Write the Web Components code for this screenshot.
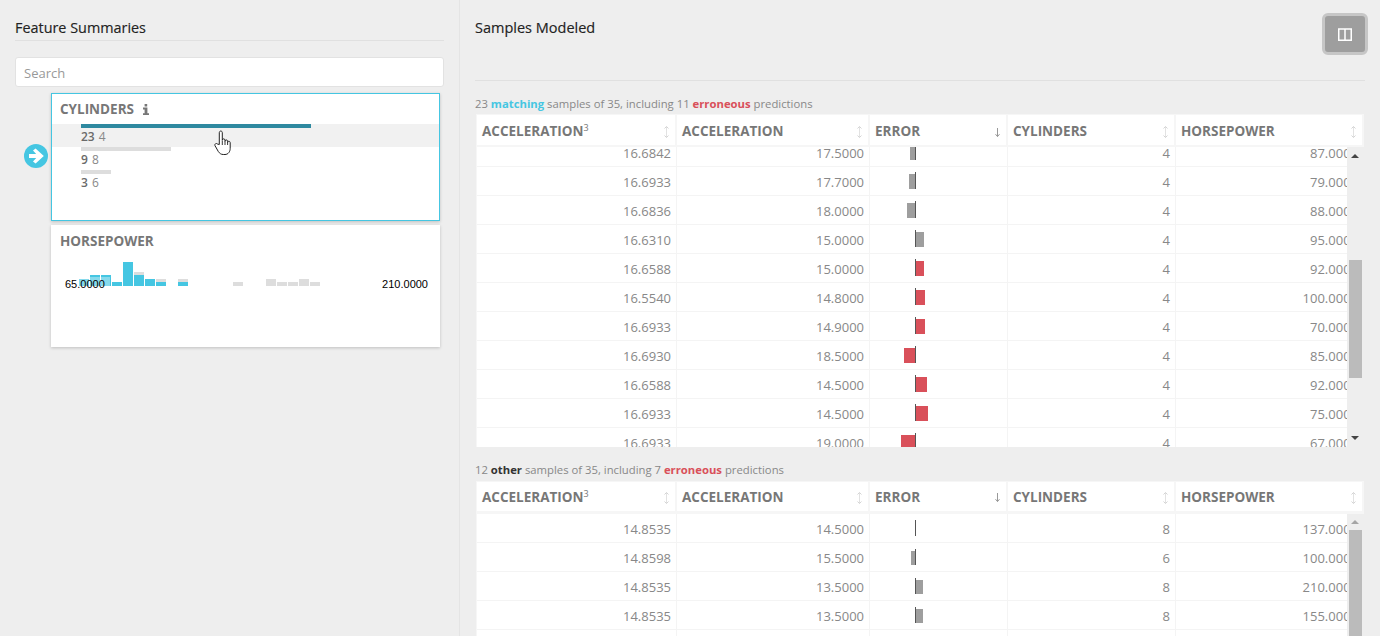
<!DOCTYPE html>
<html lang="en"><head><meta charset="utf-8"><title>Samples Modeled</title>
<style>
html,body{margin:0;padding:0;height:636px;overflow:hidden;background:#eee;font-family:"Open Sans",sans-serif;color:#777}
</style></head>
<body>
<app-shell>
  <side-panel slot="side">
    <feature-card name="CYLINDERS" info selected>
      <category-row count="23" value="4" width="230" active></category-row>
      <category-row count="9" value="8" width="90"></category-row>
      <category-row count="3" value="6" width="30"></category-row>
    </feature-card>
    <feature-card name="HORSEPOWER">
      <histo-chart min="65.0000" max="210.0000"></histo-chart>
    </feature-card>
  </side-panel>
  <main-panel slot="main">
    <sample-table set="a" head="30" gap="2" shift="-9" bodyh="300" thumbtop="113" thumbh="118">
      <span><span>23</span> <b style="color:#45c6e2">matching</b> samples of 35, including 11 <b style="color:#d9505a">erroneous</b> predictions</span>
    </sample-table>
    <sample-table set="b" head="29" gap="3" shift="0" bodyh="122" thumbtop="16" thumbh="140" lower>
      <span>12 <b style="color:#333">other</b> samples of 35, including 7 <b style="color:#d9505a">erroneous</b> predictions</span>
    </sample-table>
  </main-panel>
</app-shell>
<script>
const DATA={
 a:[["16.6842","17.5000",-5,0,"4","87.0000"],["16.6933","17.7000",-6,0,"4","79.0000"],["16.6836","18.0000",-8,0,"4","88.0000"],["16.6310","15.0000",8,0,"4","95.0000"],["16.6588","15.0000",8,1,"4","92.0000"],["16.5540","14.8000",9,1,"4","100.0000"],["16.6933","14.9000",9,1,"4","70.0000"],["16.6930","18.5000",-11,1,"4","85.0000"],["16.6588","14.5000",11,1,"4","92.0000"],["16.6933","14.5000",12,1,"4","75.0000"],["16.6933","19.0000",-14,1,"4","67.0000"]],
 b:[["14.8535","14.5000",0,0,"8","137.0000"],["14.8598","15.5000",-4,0,"6","100.0000"],["14.8535","13.5000",7,0,"8","210.0000"],["14.8535","13.5000",7,0,"8","155.0000"],["","",0,0,"",""]]
};
const COLS=["ACCELERATION<sup>3</sup>","ACCELERATION","ERROR","CYLINDERS","HORSEPOWER"];
function el(tag,render){customElements.define(tag,class extends HTMLElement{connectedCallback(){if(!this.shadowRoot){this.attachShadow({mode:"open"}).innerHTML=render(this)}}})}

el("app-shell",()=>`<style>
:host{display:flex;height:636px;overflow:hidden}
.s{flex:0 0 460px;box-sizing:border-box;border-right:1px solid #e4e4e4}
.m{flex:1;min-width:0}
</style><div class="s"><slot name="side"></slot></div><div class="m"><slot name="main"></slot></div>`);

el("side-panel",()=>`<style>
:host{display:block;padding:0 15px}
h2{margin:0;height:41px;box-sizing:border-box;padding-top:18px;font:400 14.4px/20px "Open Sans",sans-serif;color:#222;-webkit-text-stroke:.15px #222;border-bottom:1px solid #e0e0e0}
input{display:block;box-sizing:border-box;width:429px;height:30px;margin:16px 0 6px;padding:2px 8px 0;border:1px solid #e2e2e2;border-radius:3px;background:#fff;font:13px "Open Sans",sans-serif;color:#555;outline:0}
input::placeholder{color:#999;opacity:1}
.list{display:flex;flex-direction:column;gap:4px;margin-left:36px;width:389px}
</style><h2>Feature Summaries</h2><input placeholder="Search"><div class="list"><slot></slot></div>`);

el("feature-card",h=>`<style>
:host{display:block;position:relative;box-sizing:border-box;width:389px;height:${h.hasAttribute("selected")?128:122}px;background:#fff;border:1px solid ${h.hasAttribute("selected")?"#45c6e2":"#fff"};box-shadow:0 1px 3px rgba(0,0,0,.2)}
.t{display:flex;align-items:center;gap:9px;height:30px;padding-left:8px;font:700 13.5px/30px "Open Sans",sans-serif;color:#777}
.t svg{display:block}
.arrow{position:absolute;left:-28px;top:50px}
.hand{position:absolute;left:162px;top:36px}
</style><div class="t"><span>${h.getAttribute("name")}</span>${h.hasAttribute("info")?`<svg width="6" height="11" viewBox="0 0 6 11"><path d="M1.6 0h2.6v2.4H1.6zM0 3.6h4.4v5.6H6V11H0V9.2h1.6V5.4H0z" fill="#777"/></svg>`:""}</div>
<slot></slot>
${h.hasAttribute("selected")?`<svg class="arrow" width="24" height="24" viewBox="0 0 24 24"><circle cx="12" cy="12" r="12" fill="#45c6e2"/><path d="M5 10h7.2L9 6.6l2.6-2.2L19.8 12l-8.2 7.6L9 17.4l3.2-3.4H5z" fill="#fff"/></svg>
<svg class="hand" width="18" height="26" viewBox="0 0 18 26"><path d="M5.3 14.5V2.7c0-2.2 3-2.2 3 0v7.500c0-1.800 2.700-1.800 2.700 0v1c0-1.700 2.600-1.700 2.600 0v1.200c0-1.500 2.600-1.500 2.600 .2v5.800c0 3.200-2 6.100-5.200 6.100H9.300c-2.300 0-3.600-1.100-5-3L1.200 16c-1.200-1.800 1-3.400 2.400-1.900z" fill="#fff" stroke="#222" stroke-width="1"/><path d="M8.300 10.500v4.500M11 11v4M13.600 12v3" stroke="#222" stroke-width=".9" fill="none"/></svg>`:""}`);

el("category-row",h=>`<style>
:host{display:block;height:23px;padding-left:29px;background:${h.hasAttribute("active")?"#f1f1f1":"transparent"}}
.b{height:4px;width:${h.getAttribute("width")}px;background:${h.hasAttribute("active")?"#2e89a0":"#ddd"}}
.l{font:12px/18px "Open Sans",sans-serif;color:#888;white-space:nowrap}
.l b{font-weight:600;color:#6a6a6a;margin-right:1px}
</style><div class="b"></div><div class="l"><b>${h.getAttribute("count")}</b> ${h.getAttribute("value")}</div>`);

el("histo-chart",h=>{
 const bars=[[7,0,"b"],[11,0,"b"],[11,0,"b"],[4,0,"b"],[24,0,"b"],[11,3,"b"],[7,0,"b"],[4,3,"b"],[0,0],[4,3,"b"],[0,0],[0,0],[0,0],[0,0],[4,0,"g"],[0,0],[0,0],[7,0,"g"],[4,0,"g"],[4,0,"g"],[7,0,"g"],[4,0,"g"]];
 return `<style>
:host{display:block;position:relative;height:91px}
.c{display:flex;align-items:flex-end;gap:1px;height:30px;padding-left:27px}
.c div{width:10px;display:flex;flex-direction:column;flex:none}
.c i{display:block}
.lab{position:absolute;top:21px;font:11px/14px "Liberation Sans",sans-serif;color:#000;white-space:nowrap}
.mn{left:13px;padding-right:5px;background:rgba(255,255,255,.35)}
.mx{right:11px}
</style><div class="c">${bars.map(b=>`<div>${b[1]?`<i style="height:${b[1]}px;background:#ddd"></i>`:""}${b[0]?`<i style="height:${b[0]}px;background:${b[2]=="g"?"#ddd":"#45c6e2"}"></i>`:""}</div>`).join("")}</div>
<span class="lab mn">${h.getAttribute("min")}</span><span class="lab mx">${h.getAttribute("max")}</span>`});

el("main-panel",()=>`<style>
:host{display:block;padding:0 15px}
.top{display:flex;justify-content:space-between;align-items:flex-start;height:81px;box-sizing:border-box;border-bottom:1px solid #e0e0e0;width:890px}
h2{margin:0;padding-top:18px;font:400 14.5px/20px "Open Sans",sans-serif;color:#222;-webkit-text-stroke:.15px #222}
button{box-sizing:border-box;width:46px;height:42px;margin:13px -3px 0 0;padding:0;background:#9e9e9e;border:3px solid #c6c6c6;border-radius:6px;display:flex;align-items:center;justify-content:center}
button svg{display:block}
.tb{display:flex;flex-direction:column;gap:0}
</style><div class="top"><h2>Samples Modeled</h2><button aria-label="Columns"><svg width="14" height="13" viewBox="0 0 14 13"><path d="M.75 1h12.500v11.250H.75zM7 1v11" fill="none" stroke="#fff" stroke-width="1.500"/></svg></button></div><div class="tb"><slot></slot></div>`);

el("sort-mark",h=>`<style>:host{display:block;flex:none}svg{display:block}</style>${h.hasAttribute("down")
 ?`<svg width="5" height="9" viewBox="0 0 5 9"><path d="M2.500 0v8.500M.5 6.200l2 2.400 2-2.400" fill="none" stroke="#999" stroke-width="1"/></svg>`
 :`<svg width="5" height="12" viewBox="0 0 5 12"><path d="M2.500 .5v11" stroke="#e2e2e2" fill="none"/><path d="M.5 2.500l2-2 2 2M.5 9.500l2 2 2-2" stroke="#d4d4d4" fill="none"/></svg>`}`);

el("sample-table",h=>{
 const rows=DATA[h.getAttribute("set")],lower=h.hasAttribute("lower");
 const head=COLS.map((c,i)=>`<div class="h"><span>${c}</span><sort-mark ${i==2?"down":""}></sort-mark></div>`).join("");
 const err=(v,r)=>{const c=r?"#d9505a":"#9e9e9e",w=Math.abs(v);return `<div class="e"><span class="side l">${v<0?`<i style="width:${w}px;background:${c}"></i>`:""}</span><span class="ax"></span><span class="side">${v>0?`<i style="width:${w}px;background:${c}"></i>`:""}</span></div>`};
 const body=rows.map(r=>`<div class="d">${r[0]}</div><div class="d">${r[1]}</div><div class="d x">${r[0]?err(r[2],r[3]):""}</div><div class="d">${r[4]}</div><div class="d">${r[5]}</div>`).join("");
 return `<style>
:host{display:block}
.cap{font:11.3px/16px "Open Sans",sans-serif;color:#888;height:${lower?19:18}px;padding-top:15px;white-space:nowrap}
.w{background:#f6f6f6;padding:1px 2px 0 1px;width:888px;box-sizing:border-box;margin-left:1px}
.hd{display:grid;grid-template-columns:198px 191px 136px 166px 186px;gap:2px;height:${h.getAttribute("head")}px}
.h{background:#fff;display:flex;align-items:center;justify-content:space-between;padding:${lower?2:4}px 6px 0 5px;font:700 13.5px/1 "Open Sans",sans-serif;color:#777;white-space:nowrap}
.h sup{font-size:9px;font-weight:400;line-height:0;vertical-align:5px}
.v{position:relative;overflow:hidden;height:${h.getAttribute("bodyh")}px;margin:${h.getAttribute("gap")}px -2px 0 0;background:#fff}
.g{display:grid;grid-template-columns:199px 192px 137px 167px 187px;column-gap:1px;row-gap:1px;grid-auto-rows:28px;margin-top:${h.getAttribute("shift")}px;background:#f4f4f4}
.d{background:#fff;text-align:right;padding:1px 5px 0 0;font:13px/28px "Open Sans",sans-serif;color:#888;box-sizing:border-box;height:28px}
.x{padding:0}
.e{display:flex;padding-top:${lower?6:5}px;height:${lower?16:17}px}
.side{display:flex;align-items:flex-end;flex:none}
.side.l{width:45px;justify-content:flex-end}
.side i{display:block;height:${lower?14:15}px}
.ax{display:block;width:1px;height:100%;background:#555;flex:none}
.sb{position:absolute;right:0;top:0;bottom:0;width:17px;background:#eee}
.th{position:absolute;left:2px;width:13px;top:${h.getAttribute("thumbtop")}px;height:${h.getAttribute("thumbh")}px;background:#bbb}
.up,.dn{position:absolute;left:4px;width:0;height:0;border:4px solid transparent}
.up{top:${lower?6:7}px;border-top:0;border-bottom:4px solid ${lower?"#a5a5a5":"#444"}}
.dn{bottom:7px;border-bottom:0;border-top:4px solid #444}
</style><div class="cap"><slot></slot></div><div class="w"><div class="hd">${head}</div><div class="v"><div class="g">${body}</div><div class="sb"><div class="up"></div><div class="th"></div>${lower?"":'<div class="dn"></div>'}</div></div></div>`});
</script>
</body></html>
